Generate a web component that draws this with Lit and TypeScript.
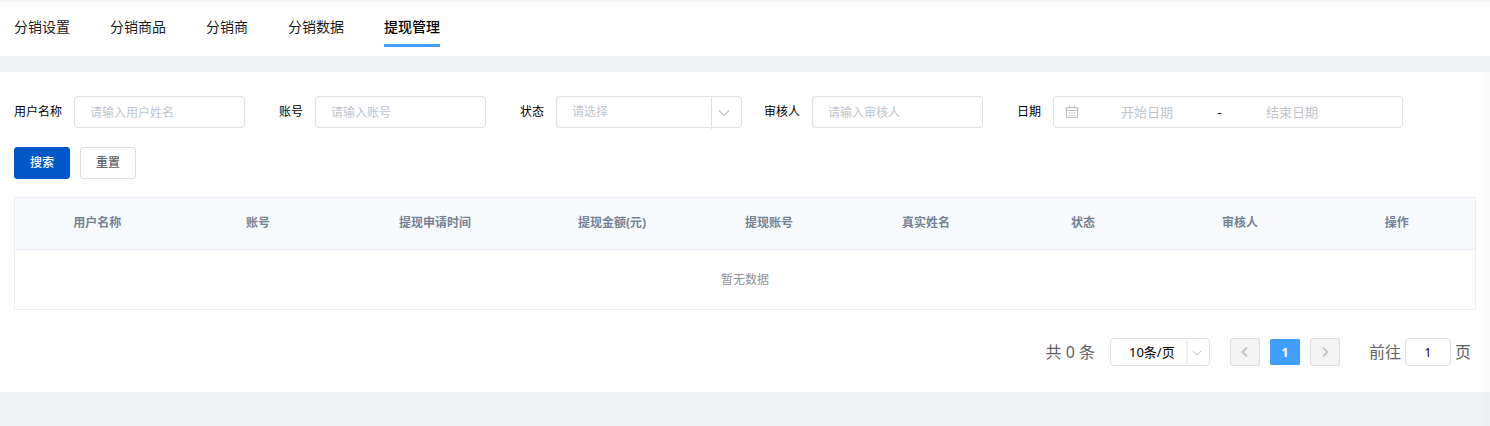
import { LitElement, html, css, svg } from "lit";
import { customElement } from "lit/decorators.js";

const tabs = ["分销设置", "分销商品", "分销商", "分销数据", "提现管理"];
const columns = ["用户名称", "账号", "提现申请时间", "提现金额(元)", "提现账号", "真实姓名", "状态", "审核人", "操作"];
const columnWidths = [165, 157, 197, 157, 157, 157, 157, 157, 157];

const chevronDown = svg`<path d="M1 3.5 6 8.5 11 3.5" />`;
const chevronLeft = svg`<path d="M8 1.5 3.5 6 8 10.5" />`;
const chevronRight = svg`<path d="M4 1.5 8.5 6 4 10.5" />`;

@customElement("app-root")
export class AppRoot extends LitElement {
  static styles = css`
    :host {
      display: block;
      position: relative;
      min-height: 100vh;
      box-sizing: border-box;
      padding-top: 2px;
      background: #eff3f6;
      color: #000;
      font-family: "Noto Sans", "Noto Sans CJK SC", sans-serif;
      font-size: 12px;
      line-height: 20px;
    }
    * {
      box-sizing: border-box;
    }
    input,
    select,
    button {
      margin: 0;
      font: inherit;
      color: inherit;
      outline: none;
    }
    svg {
      display: block;
      fill: none;
      stroke: currentColor;
    }
    .edge {
      position: absolute;
      top: 72px;
      right: 0;
      bottom: 0;
      width: 8px;
      pointer-events: none;
      background: linear-gradient(to right, transparent, rgba(0, 0, 0, 0.02));
    }
    .tabs {
      display: flex;
      gap: 40px;
      height: 54px;
      padding: 10px 14px 9px;
      background: #fff;
      font-size: 14px;
      line-height: 30px;
    }
    .tab {
      color: #1a1a1a;
      text-decoration: none;
      border-bottom: 3px solid transparent;
    }
    .tab.active {
      color: #000;
      font-weight: 500;
      border-color: #409eff;
    }
    .panel {
      margin-top: 16px;
      padding: 24px 14px 26px;
      background: #fff;
    }
    .filters {
      display: flex;
      flex-wrap: wrap;
      gap: 19px 34px;
    }
    .field {
      display: flex;
      align-items: center;
      gap: 12px;
    }
    .field.tight {
      margin-right: -12px;
    }
    .box {
      height: 32px;
      border: 1px solid #dcdfe6;
      border-radius: 4px;
      background: #fff;
    }
    .text {
      width: 171px;
      padding: 0 15px;
    }
    ::placeholder {
      color: #c0c4cc;
      opacity: 1;
    }
    .select {
      display: grid;
      grid-template-columns: 1fr 30px;
      color: #c0c4cc;
    }
    .select select {
      grid-area: 1 / 1 / 2 / 3;
      appearance: none;
      width: 100%;
      border: 0;
      padding: 0 15px;
      background: transparent;
    }
    .arrow {
      grid-area: 1 / 2;
      display: grid;
      place-items: center;
      padding-right: 5px;
      border-left: 1px solid #dcdfe6;
      pointer-events: none;
    }
    .status {
      width: 186px;
    }
    .status .arrow {
      margin-bottom: -2px;
    }
    .range {
      display: flex;
      align-items: center;
      width: 350px;
      padding: 0 11px;
      font-size: 13px;
    }
    .range svg {
      color: #c0c4cc;
    }
    .range input {
      width: 136px;
      height: 24px;
      padding: 0;
      border: 0;
      text-align: center;
      background: transparent;
    }
    .dash {
      width: 9px;
      text-align: center;
    }
    .actions {
      display: flex;
      gap: 10px;
      margin: 19px 0 18px;
    }
    .btn {
      width: 56px;
      height: 32px;
      padding: 0;
      border: 1px solid #dcdfe6;
      border-radius: 3px;
      background: #fff;
      color: #606266;
      font-weight: 500;
    }
    .btn.primary {
      border-color: #0058c8;
      background: #0058c8;
      color: #fff;
    }
    .table {
      width: 100%;
      table-layout: fixed;
      border-collapse: collapse;
      border: 1px solid #ebeef5;
    }
    .table th {
      height: 52px;
      padding: 0 0 2px;
      border-bottom: 1px solid #ebeef5;
      background: #f6fafd;
      color: #748295;
      font-weight: 700;
    }
    .empty {
      height: 60px;
      padding: 0;
      text-align: center;
      color: #909399;
    }
    .pager {
      display: flex;
      justify-content: flex-end;
      align-items: center;
      margin-top: 28px;
      padding-right: 5px;
      font-size: 16px;
      color: #606266;
    }
    .size {
      width: 100px;
      height: 28px;
      margin: 0 20px 0 15px;
      grid-template-columns: 1fr 23px;
      font-size: 13px;
    }
    .size select {
      padding: 0 18px;
      color: #000;
    }
    .size .arrow {
      margin: 2px 0 1px;
      padding-right: 2px;
      border-left: 2px solid #ebeef5;
    }
    .pages {
      display: flex;
      gap: 10px;
      margin-right: 29px;
    }
    .page {
      display: grid;
      place-items: center;
      width: 30px;
      height: 28px;
      padding: 0;
      border: 1px solid #dcdfe6;
      border-radius: 2px;
      background: #f4f4f5;
      color: #c0c4cc;
      font-size: 13px;
      font-weight: 700;
    }
    .page.current {
      border-color: #fff;
      background: #409eff;
      color: #fff;
      border-width: 1px 0;
    }
    .jump {
      display: flex;
      align-items: center;
      gap: 4px;
    }
    .jump input {
      width: 46px;
      height: 28px;
      padding: 0;
      text-align: center;
      font-size: 12px;
      color: #000;
    }
  `;

  private textField(id: string, label: string, placeholder: string) {
    return html`<div class="field">
      <label for=${id}>${label}</label>
      <input class="box text" id=${id} type="text" placeholder=${placeholder} />
    </div>`;
  }

  render() {
    return html`
      <nav class="tabs">
        ${tabs.map((t, i) => html`<a class="tab ${i === 4 ? "active" : ""}" href="#">${t}</a>`)}
      </nav>
      <main class="panel">
        <form @submit=${(e: Event) => e.preventDefault()}>
          <div class="filters">
            ${this.textField("user", "用户名称", "请输入用户姓名")}
            ${this.textField("account", "账号", "请输入账号")}
            <div class="field tight">
              <label for="status">状态</label>
              <div class="box select status">
                <select id="status"><option>请选择</option></select>
                <span class="arrow"><svg width="12" height="12" viewBox="0 0 12 12" stroke-width="1.1">${chevronDown}</svg></span>
              </div>
            </div>
            ${this.textField("auditor", "审核人", "请输入审核人")}
            <div class="field">
              <label for="start">日期</label>
              <div class="box range">
                <svg width="14" height="14" viewBox="0 0 14 14">
                  <path d="M1.5 2.5h11v10h-11zM1.5 5.5h11M4.5 1v2.5M9.5 1v2.5" stroke-width="1.2" />
                  <path d="M3.5 8h7M3.5 10.5h7" stroke-dasharray="1.8 .8" />
                </svg>
                <input id="start" type="text" placeholder="开始日期" />
                <span class="dash">-</span>
                <input id="end" type="text" aria-label="结束日期" placeholder="结束日期" />
              </div>
            </div>
          </div>
          <div class="actions">
            <button class="btn primary" type="submit">搜索</button>
            <button class="btn" type="reset">重置</button>
          </div>
        </form>
        <table class="table">
          <colgroup>
            ${columnWidths.map((w) => html`<col style="width:${w / 14.61}%" />`)}
          </colgroup>
          <thead>
            <tr>${columns.map((c) => html`<th scope="col">${c}</th>`)}</tr>
          </thead>
          <tbody>
            <tr><td class="empty" colspan="9">暂无数据</td></tr>
          </tbody>
        </table>
        <div class="pager">
          <span>共 0 条</span>
          <div class="box select size">
            <select aria-label="每页条数"><option>10条/页</option></select>
            <span class="arrow"><svg width="10" height="10" viewBox="0 0 12 12" stroke-width="1.2">${chevronDown}</svg></span>
          </div>
          <div class="pages">
            <button class="page" aria-label="上一页" disabled>
              <svg width="12" height="12" viewBox="0 0 12 12" stroke-width="1.8">${chevronLeft}</svg>
            </button>
            <button class="page current">1</button>
            <button class="page" aria-label="下一页" disabled>
              <svg width="12" height="12" viewBox="0 0 12 12" stroke-width="1.8">${chevronRight}</svg>
            </button>
          </div>
          <div class="jump">
            <label for="jump">前往</label>
            <input class="box" id="jump" type="text" .value=${"1"} />
            <span>页</span>
          </div>
        </div>
      </main>
      <div class="edge"></div>
    `;
  }
}
